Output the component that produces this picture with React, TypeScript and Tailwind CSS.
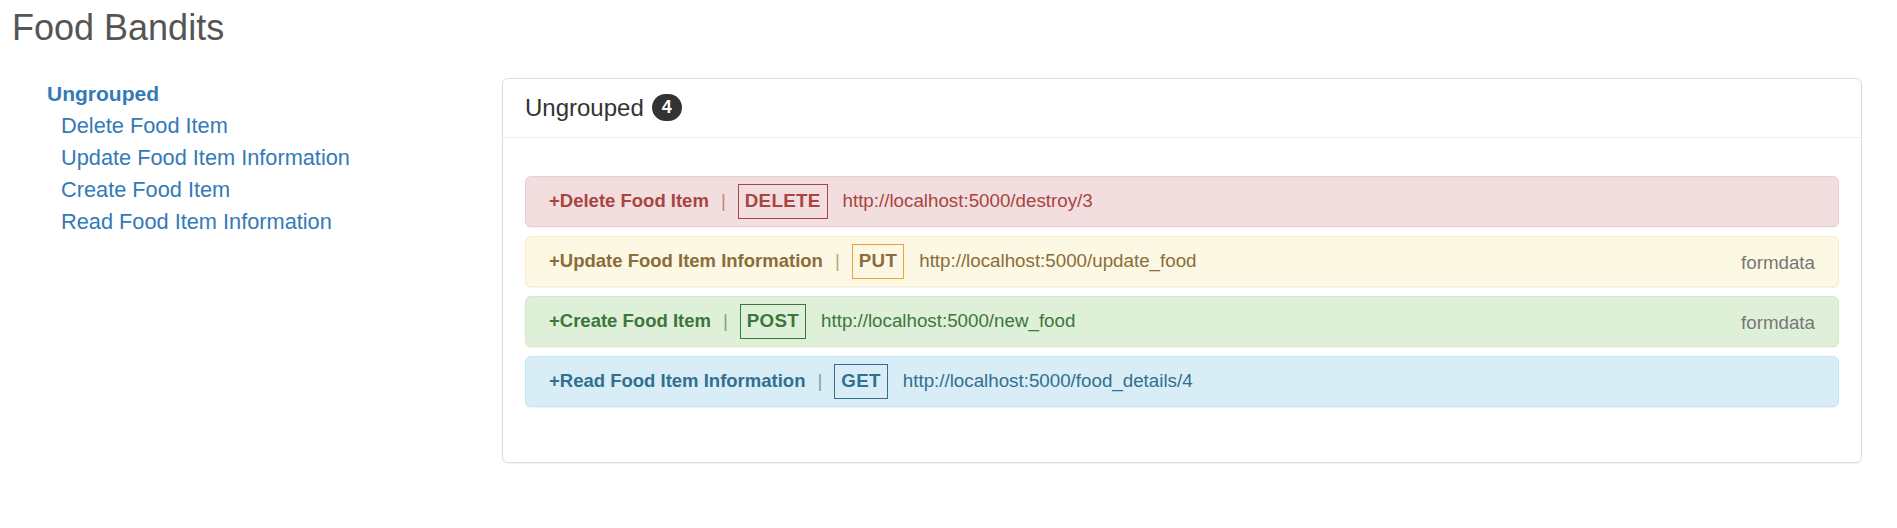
type Endpoint = {
  name: string;
  method: string;
  url: string;
  body?: string;
  row: string;
  text: string;
  box: string;
};

const endpoints: Endpoint[] = [
  {
    name: "Delete Food Item",
    method: "DELETE",
    url: "http://localhost:5000/destroy/3",
    row: "bg-[#f2dede] border-[#ebccd1]",
    text: "text-[#a94442]",
    box: "border-[#a94442]",
  },
  {
    name: "Update Food Item Information",
    method: "PUT",
    url: "http://localhost:5000/update_food",
    body: "formdata",
    row: "bg-[#fcf8e3] border-[#faebcc]",
    text: "text-[#8a6d3b]",
    box: "border-[#eea236]",
  },
  {
    name: "Create Food Item",
    method: "POST",
    url: "http://localhost:5000/new_food",
    body: "formdata",
    row: "bg-[#dff0d8] border-[#d6e9c6]",
    text: "text-[#3c763d]",
    box: "border-[#3c763d]",
  },
  {
    name: "Read Food Item Information",
    method: "GET",
    url: "http://localhost:5000/food_details/4",
    row: "bg-[#d9edf7] border-[#bce8f1]",
    text: "text-[#31708f]",
    box: "border-[#31708f]",
  },
];

export default function App() {
  return (
    <main className="min-h-screen bg-white font-['Liberation_Sans',Arial,sans-serif]">

      <h1 className="pt-[8px] pl-[12px] text-[36px] leading-[1.1] text-[#555]">
        Food Bandits
      </h1>

      <div className="flex mt-[30px]">

        {/* sidebar */}
        <nav className="w-[502px] shrink-0 pl-[47px] text-[#337ab7]">
          <div className="text-[21px] font-bold leading-[32px]">Ungrouped</div>
          <ul className="pl-[14px] text-[21.75px] leading-[32px]">
            {endpoints.map((e) => (
              <li key={e.name}>{e.name}</li>
            ))}
          </ul>
        </nav>

        {/* panel */}
        <section className="flex-1 mr-[35px] border border-[#ddd] rounded-[6px] shadow-[0_1px_1px_rgba(0,0,0,0.05)]">

          <div className="h-[59px] flex items-center px-[22px] border-b border-[#eee]">
            <span className="text-[24px] text-[#333]">Ungrouped</span>
            <span className="ml-[8px] h-[27px] min-w-[30px] px-[10px] rounded-full bg-[#333] text-white text-[18px] font-bold flex items-center justify-center">
              4
            </span>
          </div>

          <div className="px-[22px] pt-[38px] pb-[55px] flex flex-col gap-[9px]">
            {endpoints.map((e) => (
              <div
                key={e.name}
                className={`h-[51px] flex items-center px-[23px] border rounded-[6px] shadow-[0_1px_1px_rgba(0,0,0,0.05)] text-[18.75px] ${e.row} ${e.text}`}
              >
                <span className="font-bold text-[18.5px]">+{e.name}</span>
                <span className="mx-[12px] opacity-60">|</span>
                <span className={`h-[35px] flex items-center px-[6px] border font-bold tracking-[0.3px] ${e.box}`}>
                  {e.method}
                </span>
                <span className="ml-[15px]">{e.url}</span>
                {e.body && (
                  <span className="ml-auto pt-[3px] text-[#777]">{e.body}</span>
                )}
              </div>
            ))}
          </div>

        </section>

      </div>

    </main>
  );
}
